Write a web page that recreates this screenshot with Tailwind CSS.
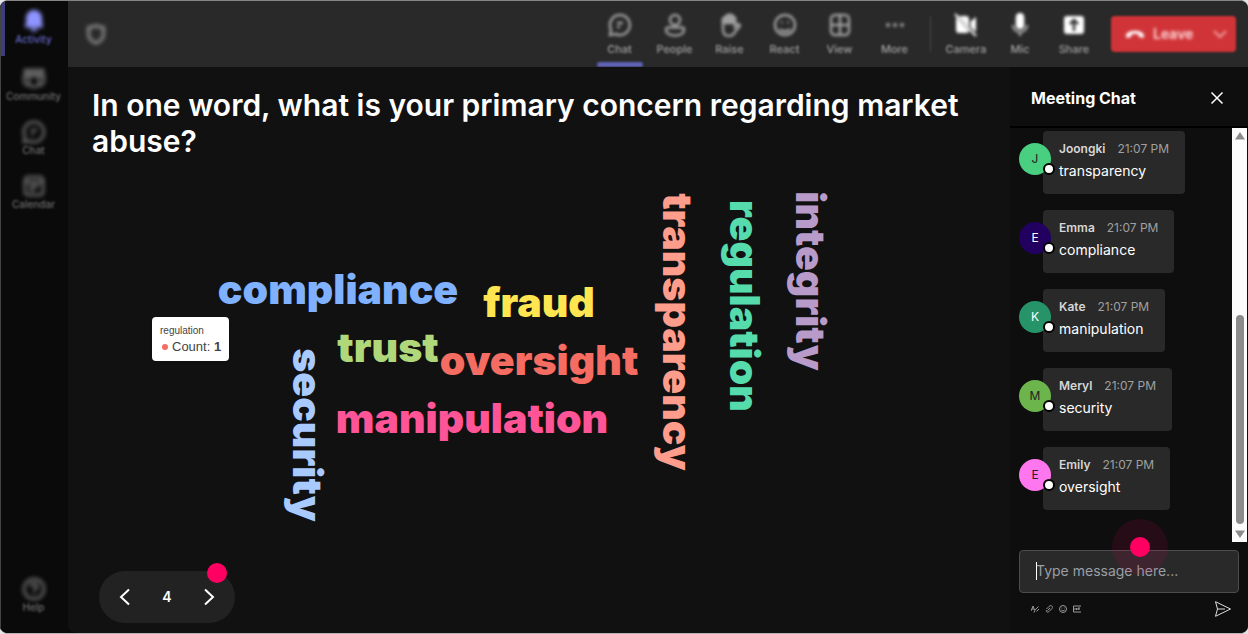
<!DOCTYPE html>
<html lang="en">
<head>
    <meta charset="UTF-8">
    <meta name="viewport" content="width=device-width, initial-scale=1.0">
    <title>Meeting</title>
    <script src="https://cdn.jsdelivr.net/npm/@tailwindcss/browser@4"></script>
</head>
<body class="bg-[#e4e4e4] font-[Inter,'Liberation_Sans',sans-serif] text-white">
    <div class="flex h-screen overflow-hidden rounded-lg border-t border-b border-t-[#858585] border-b-[#b5b5b5] bg-[#0a0a0a]">

        <!-- App rail -->
        <nav class="flex w-17 shrink-0 flex-col border-l border-[#444] bg-[#0a0a0a] pb-3 text-[10px] font-medium text-[#707070]">
            <a href="#" class="flex h-[55px] flex-col items-center border-l-4 border-[#3d3e78] pt-2.5 pr-1.5 leading-3 text-[#6669cc]">
                <svg class="-mt-0.5 size-6 shrink-0 text-[#8f95ff] blur-[2px]" viewBox="0 0 24 24" fill="currentColor"><path d="M12 1a8 8 0 0 0-8 8v5l-1 3c-.3.8.2 1.500 1 1.500h16c.8 0 1.300-.7 1-1.500l-1-3V9a8 8 0 0 0-8-8zM8.500 19.500a3.500 3 0 0 0 7 0z"/></svg>
                <span class="blur-[1px]">Activity</span>
            </a>
            <a href="#" class="flex h-[54px] flex-col items-center pt-2.5 pr-0.5 leading-3">
                <svg class="size-6 shrink-0 blur-[2px]" viewBox="0 0 24 24" fill="none" stroke="currentColor" stroke-width="2.500"><path d="M3 4h18v3H3zM7 10h10v6a5 5 0 0 1-10 0zM7 10H2v5a4 4 0 0 0 5 4M17 10h5v5a4 4 0 0 1-5 4"/></svg>
                <span class="blur-[1px]">Community</span>
            </a>
            <a href="#" class="flex h-[54px] flex-col items-center pt-2.5 pr-0.5 leading-3">
                <svg class="size-6 shrink-0 blur-[2px]" viewBox="0 0 24 24" fill="none" stroke="currentColor" stroke-width="2.500"><path d="M12 2a10 10 0 1 1-4.500 19L2 22l1-5.500A10 10 0 0 1 12 2zM9 10h6M9 14h3"/></svg>
                <span class="blur-[1px]">Chat</span>
            </a>
            <a href="#" class="flex h-[54px] flex-col items-center pt-2.5 pr-0.5 leading-3">
                <svg class="size-6 shrink-0 blur-[2px]" viewBox="0 0 24 24" fill="none" stroke="currentColor" stroke-width="2.500"><rect x="3" y="3" width="18" height="18" rx="3"/><path d="M3 8h18M7 12h10M7 16h6"/></svg>
                <span class="blur-[1px]">Calendar</span>
            </a>
            <a href="#" class="mt-auto flex h-[54px] flex-col items-center pt-2.5 pr-0.5 leading-3">
                <svg class="size-6 shrink-0 blur-[2px]" viewBox="0 0 24 24" fill="none" stroke="currentColor" stroke-width="2.500"><circle cx="12" cy="12" r="10"/><path d="M9 10a3 3 0 1 1 4 2.500c-1 .5-1 1-1 2M12 16.500v1.500"/></svg>
                <span class="blur-[1px]">Help</span>
            </a>
        </nav>

        <div class="flex min-w-0 flex-1 flex-col">
            <!-- Meeting toolbar -->
            <header class="flex h-[66px] shrink-0 items-center bg-[#292929] pr-3 pl-4 text-[11px] font-medium text-[#a0a0a0]">
                <svg class="mr-auto size-6 blur-[2px]" viewBox="0 0 24 24" fill="none" stroke="currentColor" stroke-width="2.500"><path d="M12 3.500c2.500 1.500 5 2 7.500 2v6c0 5-3 8-7.500 9.500-4.500-1.500-7.500-4.500-7.500-9.500v-6c2.500 0 5-.5 7.500-2z"/></svg>
                <div class="flex h-full">
                    <button class="relative flex w-[55px] flex-col items-center pt-3 leading-4 blur-[1px]">
                        <svg class="mb-1 size-6 blur-[1px]" viewBox="0 0 24 24" fill="none" stroke="currentColor" stroke-width="2.500"><path d="M12 2a10 10 0 1 1-4.500 19L2 22l1-5.500A10 10 0 0 1 12 2zM9 10h6M9 14h3"/></svg>
                        Chat
                        <span class="absolute bottom-0 h-[5px] w-[46px] rounded bg-[#6064b8]"></span>
                    </button>
                    <button class="flex w-[55px] flex-col items-center pt-3 leading-4 blur-[1px]">
                        <svg class="mb-1 size-6 blur-[1px]" viewBox="0 0 24 24" fill="none" stroke="currentColor" stroke-width="2.500"><circle cx="12" cy="7" r="5"/><path d="M5 14.500h14a2 2 0 0 1 2 2c0 4-4 6-9 6s-9-2-9-6a2 2 0 0 1 2-2z"/></svg>
                        People
                    </button>
                    <button class="flex w-[55px] flex-col items-center pt-3 leading-4 blur-[1px]">
                        <svg class="mb-1 size-6 blur-[1px]" viewBox="0 0 24 24" fill="none" stroke="currentColor" stroke-width="2.500"><path d="M5 12V6l3-3 3-1.500 3 1L17 5v9l2.500-2.500c1-1 3 .5 2 2L17 19c-1.500 2.500-3 4-6 4-4 0-6-3-6-7z"/><path d="M5 10h12V5l-3-3h-3L5 6z" fill="currentColor"/></svg>
                        Raise
                    </button>
                    <button class="flex w-[55px] flex-col items-center pt-3 leading-4 blur-[1px]">
                        <svg class="mb-1 size-6 blur-[1px]" viewBox="0 0 24 24" fill="none" stroke="currentColor" stroke-width="2.500"><circle cx="12" cy="12" r="10"/><path d="M7 16c2 3 8 3 10 0"/><path d="M8 9.500h1.500M14.500 9.500H16"/></svg>
                        React
                    </button>
                    <button class="flex w-[55px] flex-col items-center pt-3 leading-4 blur-[1px]">
                        <svg class="mb-1 size-6 blur-[1px]" viewBox="0 0 24 24" fill="none" stroke="currentColor" stroke-width="2.500"><rect x="3" y="2" width="18" height="20" rx="4"/><path d="M12 2v20M3 12h18"/></svg>
                        View
                    </button>
                    <button class="flex w-[55px] flex-col items-center pt-3 leading-4 blur-[1px]">
                        <svg class="mb-1 size-6 blur-[1px]" viewBox="0 0 24 24" fill="currentColor"><circle cx="5" cy="12" r="2"/><circle cx="12" cy="12" r="2"/><circle cx="19" cy="12" r="2"/></svg>
                        More
                    </button>
                    <span class="mx-2 h-9 w-px self-center bg-[#484848] blur-[1px]"></span>
                    <button class="flex w-[54px] flex-col items-center pt-3 leading-4 blur-[1px]">
                        <svg class="mb-1 size-6 text-white blur-[1px]" viewBox="0 0 24 24" fill="currentColor"><path d="M5 3h7a3 3 0 0 1 3 3v8L5 3zM2 4l13 14c-1 2-1.500 2-3 2H5a3 3 0 0 1-3-3zM16.500 8.500L22 4v15l-5.500-5z"/><path d="M1 1l21 22" stroke="currentColor" stroke-width="2"/></svg>
                        Camera
                    </button>
                    <button class="flex w-[54px] flex-col items-center pt-3 leading-4 blur-[1px]">
                        <svg class="mb-1 size-6 blur-[1px]" viewBox="0 0 24 24" fill="none" stroke="currentColor" stroke-width="2.500"><rect x="9" y="1" width="6" height="14" rx="3" fill="#fff" stroke="#fff"/><path d="M5 12a7 7 0 0 0 14 0M12 19v4"/></svg>
                        Mic
                    </button>
                    <button class="flex w-[54px] flex-col items-center pt-3 leading-4 blur-[1px]">
                        <svg class="mb-1 size-6 blur-[1px]" viewBox="0 0 24 24"><rect x="2" y="3" width="20" height="18" rx="3" fill="#fff"/><path d="M12 18V7M8 11l4-4 4 4" fill="none" stroke="#333" stroke-width="2.500"/></svg>
                        Share
                    </button>
                </div>
                <button class="ml-2.5 flex h-9 w-[125px] items-center rounded bg-[#d13438] pr-2 pl-3.5 text-sm font-semibold text-[#ffdfe0] blur-[1px]">
                    <svg class="mr-2 size-5 blur-[1px]" viewBox="0 0 20 20" fill="#fff"><path d="M1 12c-.5-7 18.500-7 18 0l-.5 2-4.500-1-.5-2.500c-2-1-5-1-7 0L6 13l-4.500 1z"/></svg>
                    <span class="blur-[1px]">Leave</span>
                    <svg class="ml-auto size-4 blur-[1px]" viewBox="0 0 16 16" fill="none" stroke="#f0a0a2" stroke-width="2"><path d="M2 5l6 6 6-6"/></svg>
                </button>
            </header>

            <div class="flex min-h-0 flex-1">
                <!-- Question stage -->
                <main class="relative flex min-w-0 flex-1 flex-col rounded-bl-lg bg-[#111] px-6 pt-5">
                    <h1 class="text-[30px] leading-9 font-semibold">In one word, what is your primary concern regarding market abuse?</h1>

                    <!-- Word cloud -->
                    <div class="absolute inset-0 text-[41px] leading-none font-black *:absolute *:-translate-x-1/2 *:-translate-y-1/2">
                        <span class="top-[222px] left-[270px] text-[#80b1ff]">compliance</span>
                        <span class="top-[235px] left-[471px] text-[#ffe651]">fraud</span>
                        <span class="top-[280px] left-[320px] text-[#b0d87a]">trust</span>
                        <span class="top-[293px] left-[471px] text-[#f56c62]">oversight</span>
                        <span class="top-[351px] left-[404px] text-[#ff5597]">manipulation</span>
                        <span class="top-[368px] left-[239px] text-[#a9caff] [writing-mode:vertical-rl]">security</span>
                        <span class="top-[265px] left-[609px] text-[#ff9d8c] [writing-mode:vertical-rl]">transparency</span>
                        <span class="top-[239px] left-[676px] text-[#55dbac] [writing-mode:vertical-rl]">regulation</span>
                        <span class="top-[214px] left-[742px] text-[#b89bc9] [writing-mode:vertical-rl]">integrity</span>
                    </div>

                    <!-- Word tooltip -->
                    <div class="absolute top-[250px] left-[84px] rounded-sm bg-white px-2 py-1.5 font-['Liberation_Sans',sans-serif] text-[#444] shadow">
                        <p class="text-[10px] leading-4">regulation</p>
                        <p class="flex items-center text-[13px] leading-4"><span class="mr-1 ml-0.5 size-1.5 rounded-full bg-[#f56c62]"></span>Count:&nbsp;<b>1</b></p>
                    </div>

                    <!-- Pager -->
                    <div class="relative mt-auto mb-2.5 ml-[7px] flex h-[52px] w-[136px] items-center justify-between rounded-full bg-[#222] px-3.5">
                        <button aria-label="Previous" class="p-0.5"><svg class="size-5" viewBox="0 0 20 20" fill="none" stroke="#fff" stroke-width="2"><path d="M14 2.500L6 10l8 7.500"/></svg></button>
                        <span class="text-sm font-semibold">4</span>
                        <button aria-label="Next" class="p-0.5"><svg class="size-5" viewBox="0 0 20 20" fill="none" stroke="#fff" stroke-width="2"><path d="M6 2.500l8 7.500-8 7.500"/></svg></button>
                        <span class="absolute -top-2 right-2 size-5 rounded-full bg-[#ff0062]"></span>
                    </div>
                </main>

                <!-- Chat panel -->
                <aside class="flex w-[238px] shrink-0 flex-col bg-[#0e0e0e]">
                    <div class="flex h-[61px] shrink-0 items-center justify-between border-b-2 border-black pt-0.5 pr-6 pl-[21px]">
                        <h2 class="text-base font-bold">Meeting Chat</h2>
                        <button aria-label="Close"><svg class="size-3.5" viewBox="0 0 14 14" fill="none" stroke="#fff" stroke-width="1.500"><path d="M1.500 1.500l11 11M12.500 1.500l-11 11"/></svg></button>
                    </div>

                    <div class="flex min-h-0 flex-1">
                        <ul class="flex flex-1 flex-col items-start gap-4 overflow-hidden pt-[3px] pl-[9px] text-xs">
                            <li class="relative ml-6 h-[63px] shrink-0 rounded bg-[#292929] px-4 pt-2">
                                <span class="absolute top-3 -left-6 flex size-8 items-center justify-center rounded-full bg-[#48cf80] text-[#222]">J</span>
                                <span class="absolute top-8 left-0 size-3 rounded-full border-2 border-black bg-white"></span>
                                <p class="flex gap-3 leading-5"><b class="font-semibold text-[#d6d6d6]">Joongki</b><time class="text-[#a0a0a0]">21:07 PM</time></p>
                                <p class="text-sm leading-6">transparency</p>
                            </li>
                            <li class="relative ml-6 h-[63px] shrink-0 rounded bg-[#292929] px-4 pt-2">
                                <span class="absolute top-3 -left-6 flex size-8 items-center justify-center rounded-full bg-[#210060]">E</span>
                                <span class="absolute top-8 left-0 size-3 rounded-full border-2 border-black bg-white"></span>
                                <p class="flex gap-3 leading-5"><b class="font-semibold text-[#d6d6d6]">Emma</b><time class="text-[#a0a0a0]">21:07 PM</time></p>
                                <p class="text-sm leading-6">compliance</p>
                            </li>
                            <li class="relative ml-6 h-[63px] shrink-0 rounded bg-[#292929] px-4 pt-2">
                                <span class="absolute top-3 -left-6 flex size-8 items-center justify-center rounded-full bg-[#269468]">K</span>
                                <span class="absolute top-8 left-0 size-3 rounded-full border-2 border-black bg-white"></span>
                                <p class="flex gap-3 leading-5"><b class="font-semibold text-[#d6d6d6]">Kate</b><time class="text-[#a0a0a0]">21:07 PM</time></p>
                                <p class="text-sm leading-6">manipulation</p>
                            </li>
                            <li class="relative ml-6 h-[63px] shrink-0 rounded bg-[#292929] px-4 pt-2">
                                <span class="absolute top-3 -left-6 flex size-8 items-center justify-center rounded-full bg-[#6cb44c] text-[#222]">M</span>
                                <span class="absolute top-8 left-0 size-3 rounded-full border-2 border-black bg-white"></span>
                                <p class="flex gap-3 leading-5"><b class="font-semibold text-[#d6d6d6]">Meryl</b><time class="text-[#a0a0a0]">21:07 PM</time></p>
                                <p class="text-sm leading-6">security</p>
                            </li>
                            <li class="relative ml-6 h-[63px] shrink-0 rounded bg-[#292929] px-4 pt-2">
                                <span class="absolute top-3 -left-6 flex size-8 items-center justify-center rounded-full bg-[#ff77ee] text-[#222]">E</span>
                                <span class="absolute top-8 left-0 size-3 rounded-full border-2 border-black bg-white"></span>
                                <p class="flex gap-3 leading-5"><b class="font-semibold text-[#d6d6d6]">Emily</b><time class="text-[#a0a0a0]">21:07 PM</time></p>
                                <p class="text-sm leading-6">oversight</p>
                            </li>
                        </ul>
                        <!-- Scrollbar -->
                        <div class="mr-px flex w-[15px] flex-col items-center bg-[#fcfcfc] py-1">
                            <svg class="h-2 w-2.5" viewBox="0 0 10 8" fill="#8b8b8b"><path d="M5 0l5 7.500H0z"/></svg>
                            <span class="mt-auto mb-1.5 h-[209px] w-2 rounded-full bg-[#8b8b8b]"></span>
                            <svg class="h-2 w-2.5" viewBox="0 0 10 8" fill="#8b8b8b"><path d="M5 8L0 .5h10z"/></svg>
                        </div>
                    </div>

                    <div class="relative shrink-0 px-[9px] pt-2 pb-4">
                        <input type="text" aria-label="Message" placeholder="Type message here..." class="h-[43px] w-full rounded border border-[#4c4c4c] bg-[#292929] px-4 pb-0.5 text-sm outline-none placeholder:text-[#9a9fa6]">
                        <span class="absolute top-5 left-[26px] h-[18px] w-px bg-white"></span>
                        <!-- Click highlight -->
                        <span class="absolute -top-[23px] left-[102px] flex size-14 items-center justify-center rounded-full bg-[#ff0062]/10"><span class="size-5 rounded-full bg-[#ff0062]"></span></span>
                        <div class="mt-2 flex items-center pr-2 pl-3 text-[#999]">
                            <div class="flex gap-1.5">
                                <button aria-label="Format"><svg class="size-2" viewBox="0 0 8 8" fill="none" stroke="currentColor"><path d="M0 6l2-5 1.500 4M1 4h2M7.500 1.500L4 5 3 7.500M5.500 6.500L8 4"/></svg></button>
                                <button aria-label="Attach"><svg class="size-2" viewBox="0 0 8 8" fill="none" stroke="currentColor"><path d="M2.500 5.500L5 3M1.500 4L4 1.500c2-2 4.500 0 3 2L4 6.500c-1.500 1.500-3.500 0-2.500-1.500"/></svg></button>
                                <button aria-label="Emoji"><svg class="size-2" viewBox="0 0 8 8" fill="none" stroke="currentColor"><circle cx="4" cy="4" r="3.500"/><path d="M2.300 5c1 1 2.400 1 3.400 0M2.500 3h.7M4.800 3h.7"/></svg></button>
                                <button aria-label="GIF"><svg class="size-2" viewBox="0 0 8 8" fill="none" stroke="currentColor"><path d="M8 1H.5v6H8M2 3v2M3.500 3v2M5 5V3h2M5 4h2"/></svg></button>
                            </div>
                            <button aria-label="Send" class="ml-auto"><svg class="size-4" viewBox="0 0 16 16" fill="none" stroke="#ddd"><path d="M.5.700L15.500 8 .5 15.300 2.500 8zM2.500 8H10"/></svg></button>
                        </div>
                    </div>
                </aside>
            </div>
        </div>
    </div>
</body>
</html>
